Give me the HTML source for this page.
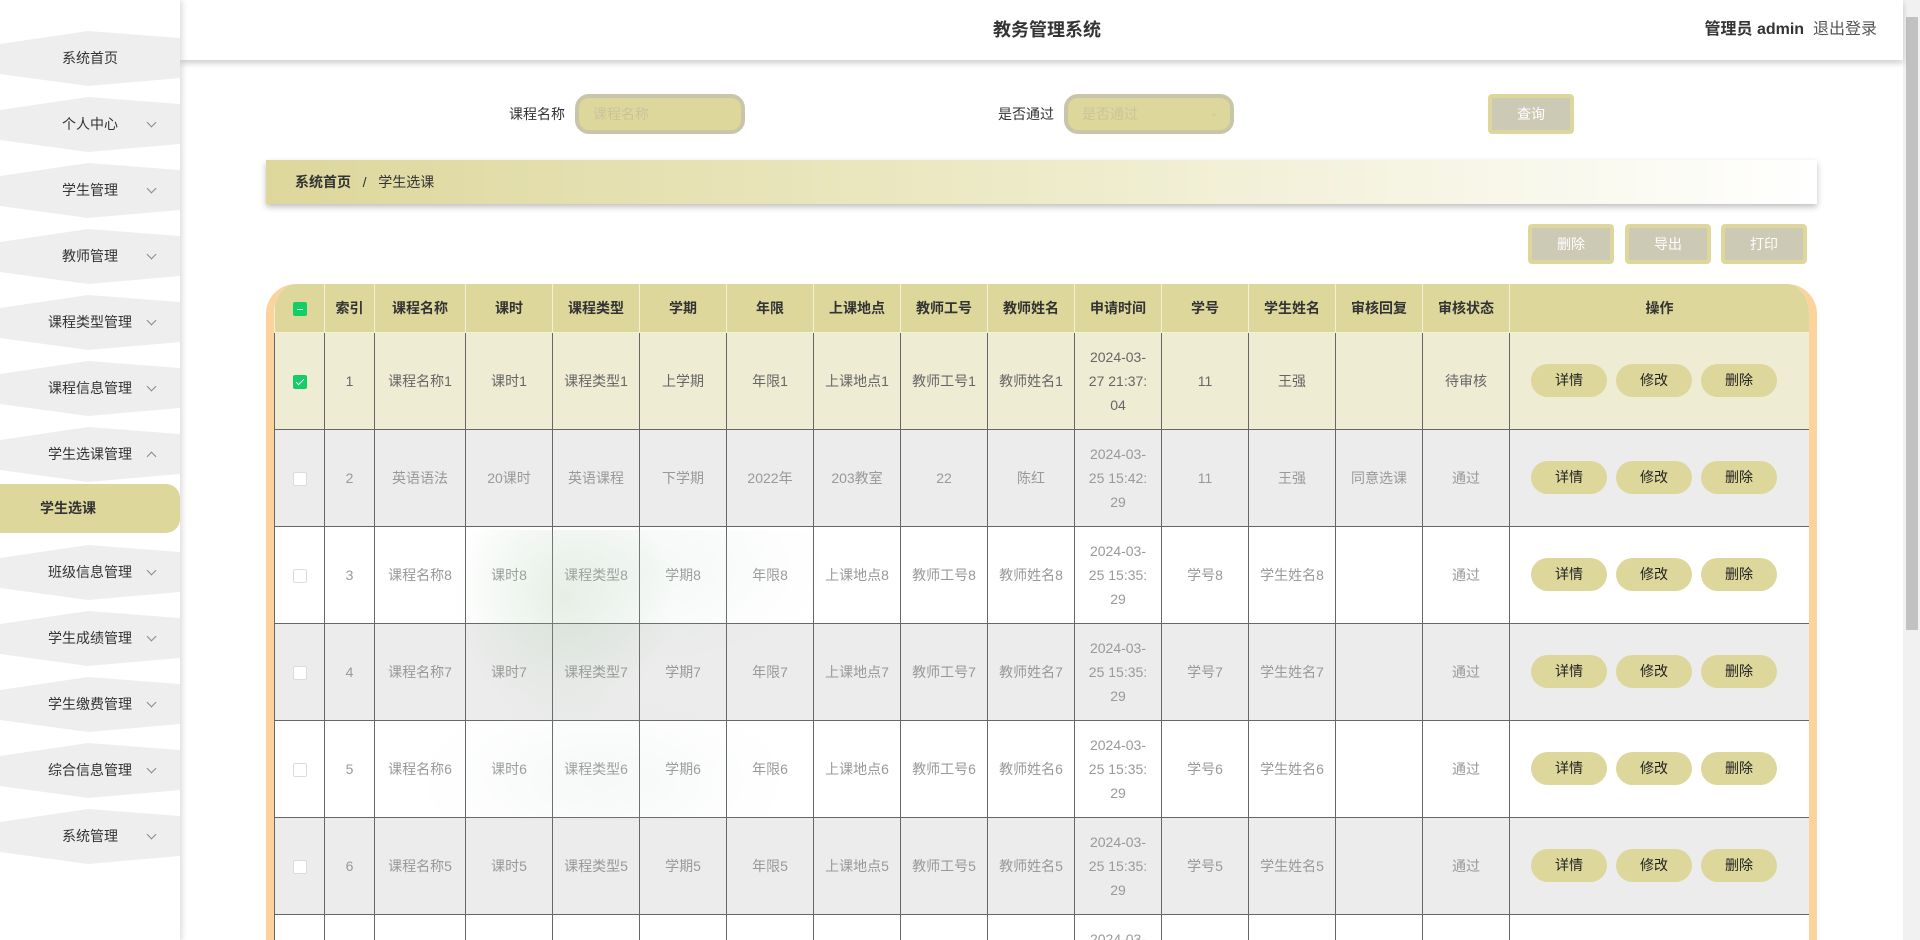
<!DOCTYPE html>
<html style="overflow:hidden;height:940px"><head><meta charset="utf-8"><style>
*{box-sizing:border-box;margin:0;padding:0}
body{width:1920px;height:940px;overflow:hidden;background:#fff;font-family:"Liberation Sans","Noto Sans CJK SC",sans-serif;position:relative;color:#333}
.side{position:absolute;left:0;top:0;width:180px;height:940px;background:#fff;box-shadow:2px 0 6px rgba(0,0,0,.15);z-index:3}
.item{position:absolute;left:0;width:180px;height:55px;background:#eee;clip-path:polygon(0 13px,88px 0,180px 7px,180px 47px,88px 55px,0 43px);font-size:14px;color:#333;text-align:center;line-height:55px}
.item span{position:absolute;left:0;width:180px;text-align:center}
.item i{position:absolute;left:148px;top:22px;width:7px;height:7px;border-right:1px solid #888;border-bottom:1px solid #888;transform:rotate(45deg)}
.item i.up{transform:rotate(-135deg);top:26px}
.active{position:absolute;left:0;top:484px;width:180px;height:49px;background:#ddd79c;border-radius:0 14px 14px 0;font-size:14px;font-weight:bold;line-height:49px;padding-left:40px;color:#333}
.head{position:absolute;left:180px;top:0;width:1723px;height:60px;background:#fff;box-shadow:0 3px 6px rgba(0,0,0,.2);z-index:2}
.title{position:absolute;left:867px;top:0;width:0;white-space:nowrap;font-size:18px;font-weight:bold;line-height:60px}
.user{position:absolute;right:26px;top:0;line-height:60px;font-size:16px;white-space:nowrap}
.sb{position:absolute;left:1903px;top:0;width:17px;height:940px;background:#f1f1f1}
.sb div{position:absolute;left:3px;top:17px;width:12px;height:613px;background:#c1c1c1}
.lbl{position:absolute;top:104px;font-size:14px;color:#333}
.inp{position:absolute;top:94px;width:170px;height:40px;background:#ddd79c;border:4px solid #c8c5a8;border-radius:14px;font-size:14px;color:#c9c49a;padding-left:14px;line-height:32px}
.qbtn{position:absolute;width:86px;height:40px;background:#ccc9b4;border:4px solid #ddd79c;border-radius:4px;color:#fff;font-size:14px;text-align:center;line-height:32px}
.crumb{position:absolute;left:266px;top:160px;width:1551px;height:44px;background:linear-gradient(90deg,#ddd79c,#ece9c4 45%,#fff);box-shadow:0 3px 6px rgba(0,0,0,.25);font-size:14px;line-height:44px;padding-left:29px;color:#333}
.crumb b{font-weight:bold}
.tw{position:absolute;left:266px;top:284px;width:1551px;height:656px;border:8px solid #fcd39c;border-top:0;border-bottom:0;border-radius:30px 30px 0 0;overflow:hidden;background:#fff}
table{border-collapse:collapse;table-layout:fixed;width:1535px;font-size:14px}
th{height:48px;background:#ddd79c;color:#333;font-weight:bold;border:1px solid #f3f0d8;border-top:0;text-align:center}
td{height:97px;border:1px solid #666;text-align:center;color:#999;line-height:24px}
tr.r1 td{background:#efecd4;color:#666}
tr.g td{background:#ececec}
tr.w td{background:rgba(255,255,255,.72)}
td.op{text-align:left;padding-left:21px}
.cb{display:inline-block;width:14px;height:14px;border:1px solid #dcdcdc;background:#fff;border-radius:2px;vertical-align:middle}
.cb.on{background:#13ce66;border-color:#13ce66;position:relative}
.cb.on:after{content:"";position:absolute;left:4px;top:1px;width:3px;height:7px;border-right:1.5px solid #fff;border-bottom:1.5px solid #fff;transform:rotate(45deg)}
.cb.ind{background:#13ce66;border-color:#13ce66;position:relative}
.cb.ind:after{content:"";position:absolute;left:3px;top:6px;width:6px;height:1.5px;background:#fff}
.ob{display:inline-block;width:76px;height:33px;border-radius:17px;background:#ddd79c;color:#222;line-height:33px;margin:0 9px 0 0;font-size:14px;text-align:center}
.wm{position:absolute;left:343px;top:530px;width:530px;height:290px;background:radial-gradient(ellipse 130px 150px at 220px 70px,rgba(160,195,160,.22),transparent 85%),radial-gradient(ellipse 220px 120px at 300px 40px,rgba(180,205,190,.15),transparent 85%),radial-gradient(ellipse 220px 110px at 260px 250px,rgba(190,210,200,.14),transparent 85%);pointer-events:none;z-index:1}
</style></head><body>
<div class="side">
<div class="item" style="top:31px"><span>系统首页</span></div>
<div class="item" style="top:97px"><span>个人中心</span><i></i></div>
<div class="item" style="top:163px"><span>学生管理</span><i></i></div>
<div class="item" style="top:229px"><span>教师管理</span><i></i></div>
<div class="item" style="top:295px"><span>课程类型管理</span><i></i></div>
<div class="item" style="top:361px"><span>课程信息管理</span><i></i></div>
<div class="item" style="top:427px"><span>学生选课管理</span><i class="up"></i></div>
<div class="active">学生选课</div>
<div class="item" style="top:545px"><span>班级信息管理</span><i></i></div>
<div class="item" style="top:611px"><span>学生成绩管理</span><i></i></div>
<div class="item" style="top:677px"><span>学生缴费管理</span><i></i></div>
<div class="item" style="top:743px"><span>综合信息管理</span><i></i></div>
<div class="item" style="top:809px"><span>系统管理</span><i></i></div>
</div>
<div class="head"><div class="title"><span style="position:relative;left:-54px">教务管理系统</span></div>
<div class="user"><b>管理员 admin</b>&nbsp;&nbsp;<span style="color:#555">退出登录</span></div></div>
<div class="sb"><div></div></div>
<div class="lbl" style="left:509px">课程名称</div>
<div class="inp" style="left:575px">课程名称</div>
<div class="lbl" style="left:998px">是否通过</div>
<div class="inp" style="left:1064px">是否通过<span style="position:absolute;right:12px;font-size:10px">⌄</span></div>
<div class="qbtn" style="left:1488px;top:94px">查询</div>
<div class="crumb"><b>系统首页</b>&nbsp;&nbsp; / &nbsp;&nbsp;学生选课</div>
<div class="qbtn" style="left:1528px;top:224px">删除</div>
<div class="qbtn" style="left:1625px;top:224px">导出</div>
<div class="qbtn" style="left:1721px;top:224px">打印</div>
<div class="tw"><table>
<colgroup><col style="width:50px"><col style="width:50px"><col style="width:91px"><col span="12" style="width:87px"><col style="width:300px"></colgroup>
<tr><th><span class="cb ind"></span></th><th>索引</th><th>课程名称</th><th>课时</th><th>课程类型</th><th>学期</th><th>年限</th><th>上课地点</th><th>教师工号</th><th>教师姓名</th><th>申请时间</th><th>学号</th><th>学生姓名</th><th>审核回复</th><th>审核状态</th><th>操作</th></tr>
<tr class="r1"><td><span class="cb on"></span></td><td>1</td><td>课程名称1</td><td>课时1</td><td>课程类型1</td><td>上学期</td><td>年限1</td><td>上课地点1</td><td>教师工号1</td><td>教师姓名1</td><td>2024-03-<br>27 21:37:<br>04</td><td>11</td><td>王强</td><td></td><td>待审核</td><td class="op"><span class="ob">详情</span><span class="ob">修改</span><span class="ob">删除</span></td></tr>
<tr class="g"><td><span class="cb"></span></td><td>2</td><td>英语语法</td><td>20课时</td><td>英语课程</td><td>下学期</td><td>2022年</td><td>203教室</td><td>22</td><td>陈红</td><td>2024-03-<br>25 15:42:<br>29</td><td>11</td><td>王强</td><td>同意选课</td><td>通过</td><td class="op"><span class="ob">详情</span><span class="ob">修改</span><span class="ob">删除</span></td></tr>
<tr class="w"><td><span class="cb"></span></td><td>3</td><td>课程名称8</td><td>课时8</td><td>课程类型8</td><td>学期8</td><td>年限8</td><td>上课地点8</td><td>教师工号8</td><td>教师姓名8</td><td>2024-03-<br>25 15:35:<br>29</td><td>学号8</td><td>学生姓名8</td><td></td><td>通过</td><td class="op"><span class="ob">详情</span><span class="ob">修改</span><span class="ob">删除</span></td></tr>
<tr class="g"><td><span class="cb"></span></td><td>4</td><td>课程名称7</td><td>课时7</td><td>课程类型7</td><td>学期7</td><td>年限7</td><td>上课地点7</td><td>教师工号7</td><td>教师姓名7</td><td>2024-03-<br>25 15:35:<br>29</td><td>学号7</td><td>学生姓名7</td><td></td><td>通过</td><td class="op"><span class="ob">详情</span><span class="ob">修改</span><span class="ob">删除</span></td></tr>
<tr class="w"><td><span class="cb"></span></td><td>5</td><td>课程名称6</td><td>课时6</td><td>课程类型6</td><td>学期6</td><td>年限6</td><td>上课地点6</td><td>教师工号6</td><td>教师姓名6</td><td>2024-03-<br>25 15:35:<br>29</td><td>学号6</td><td>学生姓名6</td><td></td><td>通过</td><td class="op"><span class="ob">详情</span><span class="ob">修改</span><span class="ob">删除</span></td></tr>
<tr class="g"><td><span class="cb"></span></td><td>6</td><td>课程名称5</td><td>课时5</td><td>课程类型5</td><td>学期5</td><td>年限5</td><td>上课地点5</td><td>教师工号5</td><td>教师姓名5</td><td>2024-03-<br>25 15:35:<br>29</td><td>学号5</td><td>学生姓名5</td><td></td><td>通过</td><td class="op"><span class="ob">详情</span><span class="ob">修改</span><span class="ob">删除</span></td></tr>
<tr class="w"><td><span class="cb"></span></td><td>7</td><td>课程名称4</td><td>课时4</td><td>课程类型4</td><td>学期4</td><td>年限4</td><td>上课地点4</td><td>教师工号4</td><td>教师姓名4</td><td>2024-03-<br>25 15:35:<br>29</td><td>学号4</td><td>学生姓名4</td><td></td><td>通过</td><td class="op"><span class="ob">详情</span><span class="ob">修改</span><span class="ob">删除</span></td></tr>
</table></div>
<div class="wm"></div>
</body></html>
